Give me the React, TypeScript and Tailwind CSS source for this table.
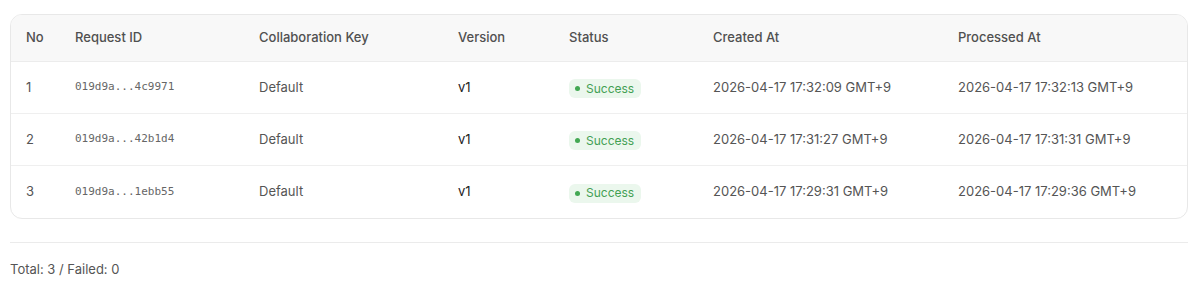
import React from 'react';

const rows = [
  { no: 1, id: '019d9a...4c9971', key: 'Default', version: 'v1', created: '2026-04-17 17:32:09 GMT+9', processed: '2026-04-17 17:32:13 GMT+9' },
  { no: 2, id: '019d9a...42b1d4', key: 'Default', version: 'v1', created: '2026-04-17 17:31:27 GMT+9', processed: '2026-04-17 17:31:31 GMT+9' },
  { no: 3, id: '019d9a...1ebb55', key: 'Default', version: 'v1', created: '2026-04-17 17:29:31 GMT+9', processed: '2026-04-17 17:29:36 GMT+9' },
];

const cols = 'grid grid-cols-[64px_184px_199px_111px_144px_245px_1fr] items-center';

export default function App() {
  return (
    <div className="bg-white px-[10px] pt-[14px] pr-[12px] font-['Inter','Liberation_Sans',sans-serif] text-[13px] text-[#555]">
      <div className="rounded-xl border border-[#e8e8e8] overflow-hidden">
        <div className={`${cols} h-[47px] bg-[#f8f8f8] border-b border-[#ececec] font-medium text-[#505050]`}>
          <div className="pl-[15px]">No</div>
          <div>Request ID</div>
          <div>Collaboration Key</div>
          <div>Version</div>
          <div>Status</div>
          <div>Created At</div>
          <div>Processed At</div>
        </div>
        {rows.map((r, i) => (
          <div
            key={r.no}
            className={`${cols} h-[52px] ${i < rows.length - 1 ? 'border-b border-[#efefef]' : ''}`}
          >
            <div className="pl-[15px]">{r.no}</div>
            <div className="font-['DejaVu_Sans_Mono',monospace] text-[11px] text-[#666]">{r.id}</div>
            <div>{r.key}</div>
            <div className="text-[#222]">{r.version}</div>
            <div>
              <span className="inline-flex items-center gap-[6px] rounded-md bg-[#ebf7ed] pl-[6px] pr-[7px] h-[19px] text-[12px] text-[#43a053]">
                <span className="w-[5px] h-[5px] rounded-full bg-[#43a853]" />
                Success
              </span>
            </div>
            <div>{r.created}</div>
            <div>{r.processed}</div>
          </div>
        ))}
      </div>
      <div className="mt-[23px] border-t border-[#ebebeb] pt-[17px] text-[13px] text-[#555]">
        Total: 3 / Failed: 0
      </div>
    </div>
  );
}
